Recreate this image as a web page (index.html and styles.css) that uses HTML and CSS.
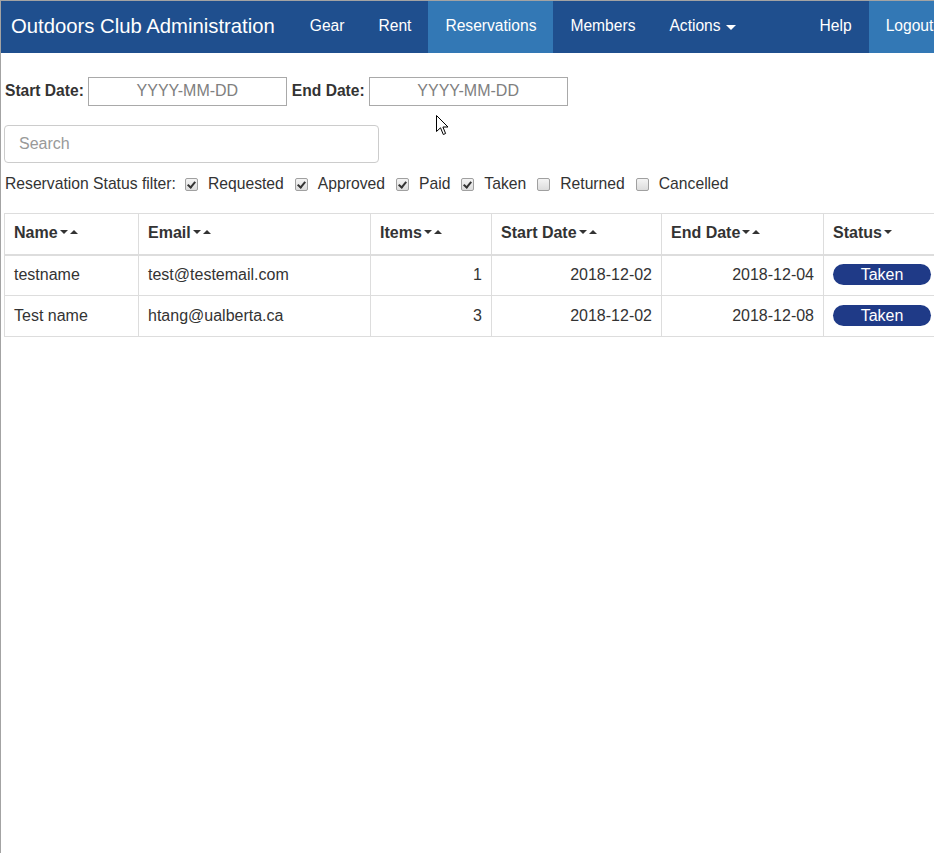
FILE: index.html
```html
<!DOCTYPE html>
<html>
<head>
<meta charset="utf-8">
<title>Outdoors Club Administration</title>
<link rel="stylesheet" href="styles.css">
</head>
<body>
<nav class="navbar">
  <a class="brand">Outdoors Club Administration</a>
  <ul class="nav">
    <li><a>Gear</a></li>
    <li><a>Rent</a></li>
    <li class="active"><a>Reservations</a></li>
    <li><a>Members</a></li>
    <li><a>Actions <span class="caret"></span></a></li>
  </ul>
  <ul class="nav nav-right">
    <li><a>Help</a></li>
    <li class="active"><a>Logout</a></li>
  </ul>
</nav>

<main class="content">
  <div class="dates">
    <label class="date-label">Start Date:</label>
    <input class="date-input" type="text" placeholder="YYYY-MM-DD">
    <label class="date-label">End Date:</label>
    <input class="date-input" type="text" placeholder="YYYY-MM-DD">
  </div>

  <input class="search" type="text" placeholder="Search">

  <div class="filter">
    <span class="filter-title">Reservation Status filter:</span>
    <label class="opt"><input type="checkbox" checked><span>Requested</span></label>
    <label class="opt"><input type="checkbox" checked><span>Approved</span></label>
    <label class="opt"><input type="checkbox" checked><span>Paid</span></label>
    <label class="opt"><input type="checkbox" checked><span>Taken</span></label>
    <label class="opt"><input type="checkbox"><span>Returned</span></label>
    <label class="opt"><input type="checkbox"><span>Cancelled</span></label>
  </div>

  <table class="grid">
    <colgroup>
      <col class="c-name"><col class="c-email"><col class="c-items"><col class="c-start"><col class="c-end"><col class="c-status">
    </colgroup>
    <thead>
      <tr>
        <th>Name<span class="sort"><i class="down"></i><i class="up"></i></span></th>
        <th>Email<span class="sort"><i class="down"></i><i class="up"></i></span></th>
        <th>Items<span class="sort"><i class="down"></i><i class="up"></i></span></th>
        <th>Start Date<span class="sort"><i class="down"></i><i class="up"></i></span></th>
        <th>End Date<span class="sort"><i class="down"></i><i class="up"></i></span></th>
        <th>Status<span class="sort"><i class="down"></i></span></th>
      </tr>
    </thead>
    <tbody>
      <tr>
        <td>testname</td>
        <td>test@testemail.com</td>
        <td class="num">1</td>
        <td class="num">2018-12-02</td>
        <td class="num">2018-12-04</td>
        <td><span class="badge">Taken</span></td>
      </tr>
      <tr>
        <td>Test name</td>
        <td>htang@ualberta.ca</td>
        <td class="num">3</td>
        <td class="num">2018-12-02</td>
        <td class="num">2018-12-08</td>
        <td><span class="badge">Taken</span></td>
      </tr>
    </tbody>
  </table>
</main>

<svg class="cursor" width="13" height="21" viewBox="0 0 13 21" xmlns="http://www.w3.org/2000/svg">
  <path d="M0.5 0.5 L0.5 16.5 L4.5 12.8 L7.3 19.5 L9.6 18.5 L6.9 12 L12 12 Z" fill="#fff" stroke="#000" stroke-width="1" stroke-linejoin="miter"/>
</svg>
</body>
</html>
```

FILE: styles.css
```css
html, body {
  overflow: hidden;
}
body {
  margin: 0;
  min-height: 852px;
  border-top: 1px solid #a3a3a3;
  border-left: 1px solid #a3a3a3;
  font-family: "Liberation Sans", Arial, sans-serif;
  font-size: 16px;
  color: #333;
  background: #fff;
  position: relative;
}

.navbar {
  display: flex;
  align-items: stretch;
  height: 52px;
  width: 980px;
  background: #1f4f8e;
  color: #fff;
}
.brand {
  display: flex;
  align-items: center;
  padding: 0 18px 1px 10px;
  font-size: 20.3px;
  color: #fff;
}
.nav {
  display: flex;
  list-style: none;
  margin: 0;
  padding: 0;
}
.nav li {
  display: flex;
}
.nav a {
  display: flex;
  align-items: center;
  padding: 0 17px 2px 17px;
  color: #fff;
  font-size: 15.6px;
}
.nav .active a {
  background: #3378b5;
}
.nav-right {
  margin-left: 50px;
}
.caret {
  display: inline-block;
  width: 0;
  height: 0;
  margin-left: 5px;
  border-top: 5px solid #fff;
  border-left: 5px solid transparent;
  border-right: 5px solid transparent;
  position: relative;
  top: 1px;
}

.content {
  padding: 24px 3px 0 3px;
}

.dates {
  display: flex;
  align-items: center;
  height: 28px;
}
.date-label {
  font-weight: bold;
  font-size: 15.6px;
  margin-left: 1px;
  margin-right: 4px;
}
.date-input {
  box-sizing: border-box;
  width: 199px;
  height: 29px;
  border: 1px solid #a9a9a9;
  padding: 0 2px;
  font-family: inherit;
  font-size: 16px;
  text-align: center;
  margin: 0 4px 0 0;
}
.date-input::placeholder {
  color: #808080;
}

.search {
  display: block;
  box-sizing: border-box;
  width: 375px;
  height: 38px;
  margin: 20px 0 0 0;
  padding: 0 14px;
  border: 1px solid #ccc;
  border-radius: 4px;
  font-family: inherit;
  font-size: 16px;
  color: #555;
}
.search::placeholder {
  color: #999;
}

.filter {
  display: flex;
  align-items: center;
  height: 22px;
  margin-top: 10px;
  margin-left: 1px;
  font-size: 15.7px;
}
.opt {
  display: flex;
  align-items: center;
  margin-left: 9px;
}
.opt span {
  margin-right: 2px;
}
.opt input {
  -webkit-appearance: none;
  appearance: none;
  box-sizing: border-box;
  width: 13px;
  height: 13px;
  margin: 0 10px 0 0;
  border: 1px solid #a0a0a0;
  border-radius: 2px;
  background: linear-gradient(#f4f4f4, #dcdcdc);
  position: relative;
}
.opt input:checked::after {
  content: "";
  position: absolute;
  left: 3px;
  top: 1px;
  width: 3px;
  height: 6px;
  border-right: 2px solid #333;
  border-bottom: 2px solid #333;
  transform: rotate(40deg);
}

.grid {
  margin-top: 18px;
  border-collapse: collapse;
  table-layout: fixed;
  width: 938px;
  border: 1px solid #ddd;
}
.c-name { width: 134px; }
.c-email { width: 232px; }
.c-items { width: 121px; }
.c-start { width: 170px; }
.c-end { width: 162px; }
.c-status { width: 119px; }

.grid th, .grid td {
  border: 1px solid #ddd;
  padding: 8px 9px;
  line-height: 23px;
  text-align: left;
  vertical-align: middle;
  white-space: nowrap;
}
.grid th {
  font-weight: bold;
  height: 24px;
  padding: 6px 9px 10px 9px;
  border-bottom: 2px solid #ddd;
}
.grid td {
  padding: 7px 9px 9px 9px;
}
.grid tbody tr + tr td {
  padding: 8px 9px 9px 9px;
}
.grid td.num {
  text-align: right;
}

.sort {
  display: inline-flex;
  align-items: center;
  margin-left: 2px;
  gap: 2px;
  vertical-align: middle;
  position: relative;
  top: -1px;
}
.sort i {
  display: inline-block;
  width: 0;
  height: 0;
  border-left: 4px solid transparent;
  border-right: 4px solid transparent;
}
.sort .down {
  border-top: 4px solid #333;
}
.sort .up {
  border-bottom: 4px solid #333;
}

.badge {
  display: block;
  width: 98px;
  height: 21px;
  line-height: 21px;
  border-radius: 11px;
  background: #1f3a87;
  color: #fff;
  text-align: center;
  font-size: 16px;
}

.cursor {
  position: absolute;
  left: 435px;
  top: 114px;
}
```
